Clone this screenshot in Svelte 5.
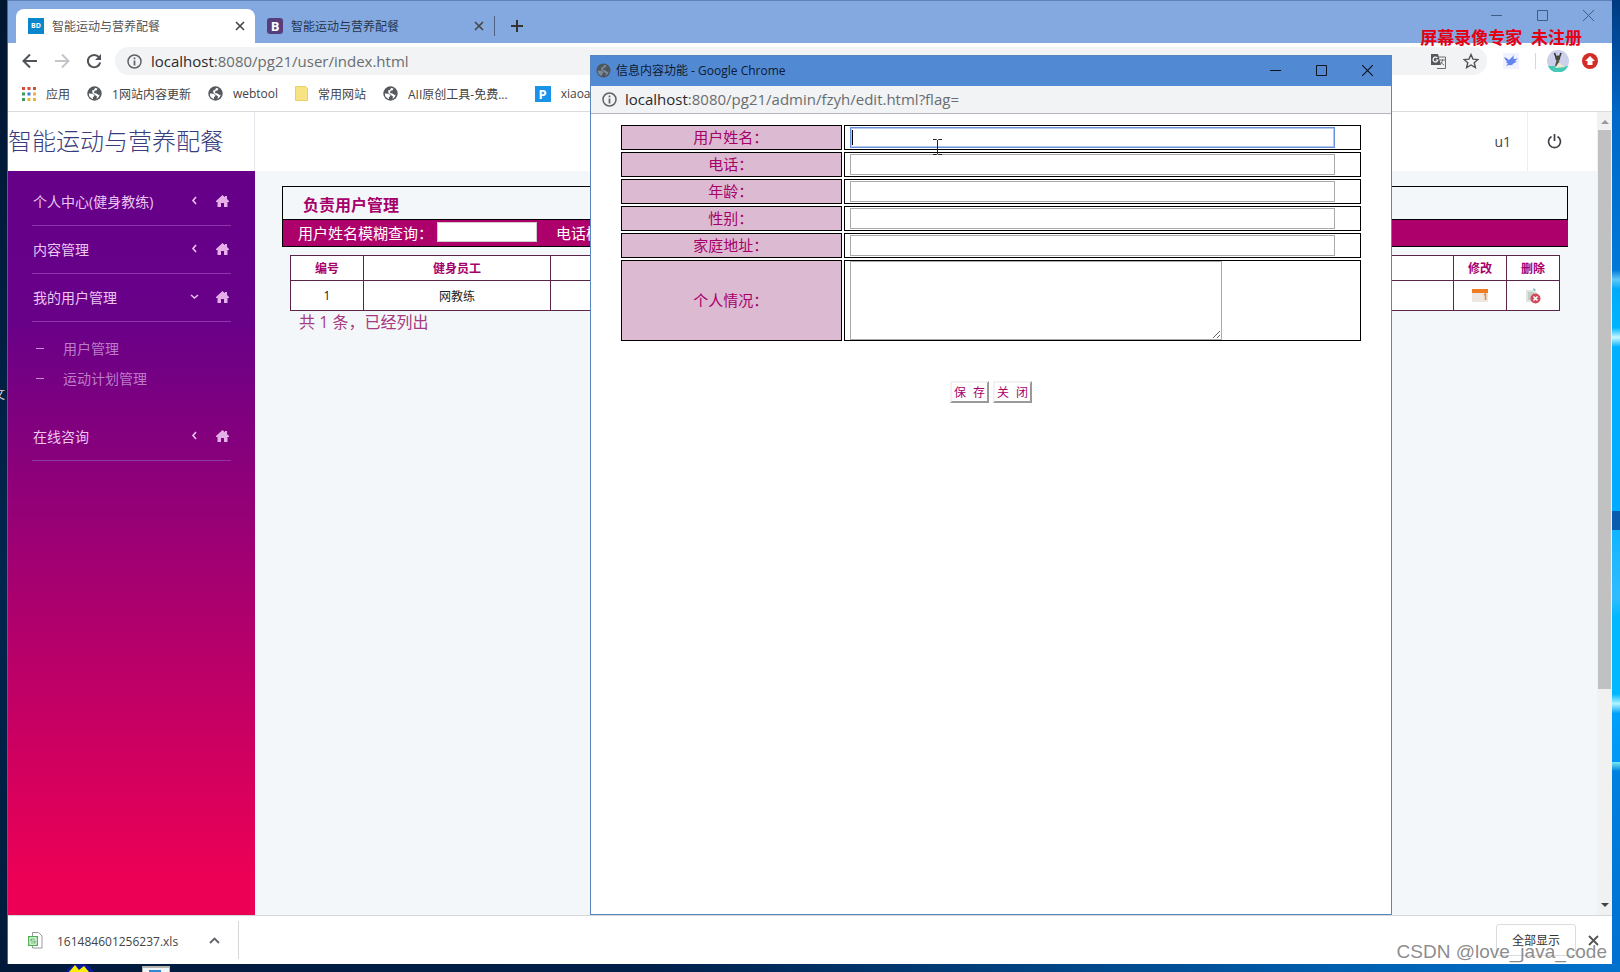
<script>
  let tabs = [
    { title: '智能运动与营养配餐', icon: 'bd', active: true },
    { title: '智能运动与营养配餐', icon: 'b', active: false }
  ];

  let bookmarks = [
    { name: '应用', icon: 'apps' },
    { name: '1网站内容更新', icon: 'globe' },
    { name: 'webtool', icon: 'globe' },
    { name: '常用网站', icon: 'folder' },
    { name: 'AII原创工具-免费...', icon: 'globe' },
    { name: 'xiaoa', icon: 'p' }
  ];

  let menu = [
    { name: '个人中心(健身教练)', open: false, children: [] },
    { name: '内容管理', open: false, children: [] },
    { name: '我的用户管理', open: true, children: ['用户管理', '运动计划管理'] },
    { name: '在线咨询', open: false, children: [] }
  ];

  let fields = [
    { id: 'yhxm', label: '用户姓名：' },
    { id: 'dh', label: '电话：' },
    { id: 'nl', label: '年龄：' },
    { id: 'xb', label: '性别：' },
    { id: 'jtdz', label: '家庭地址：' }
  ];
  let form = {};
</script>

<div class="desktop">
  <div class="wall-left"><span>文</span></div>
  <div class="browser">
    <div class="tabs">
      {#each tabs as tab}
        <div class="tab" class:active={tab.active}>
          {#if tab.icon === 'bd'}
            <span class="fav bd">BD</span>
          {:else}
            <span class="fav boot">B</span>
          {/if}
          <span class="tab-title">{tab.title}</span>
          <button class="plain" aria-label="关闭标签页">
            <svg width="10" height="10" viewBox="0 0 10 10"><path d="M1 1l8 8M9 1l-8 8" stroke="#444" stroke-width="1.6" /></svg>
          </button>
        </div>
      {/each}
      <button class="plain new-tab" aria-label="新标签页">
        <svg width="12" height="12" viewBox="0 0 12 12"><path d="M6 0v12M0 6h12" stroke="#333" stroke-width="2" /></svg>
      </button>
      <div class="win-btns faded">
        <button class="plain" aria-label="最小化"><svg width="11" height="11" viewBox="0 0 11 11"><path d="M0 5.5h11" stroke="#3f5b86" /></svg></button>
        <button class="plain" aria-label="最大化"><svg width="11" height="11" viewBox="0 0 11 11"><path d="M.5.5h10v10h-10z" fill="none" stroke="#3f5b86" /></svg></button>
        <button class="plain" aria-label="关闭"><svg width="11" height="11" viewBox="0 0 11 11"><path d="M0 0l11 11M11 0L0 11" stroke="#3f5b86" /></svg></button>
      </div>
    </div>

    <div class="toolbar">
      <button class="plain" aria-label="后退"><svg width="16" height="16" viewBox="0 0 16 16"><path d="M15 8H2M8 1.500L1.500 8 8 14.500" fill="none" stroke="#505357" stroke-width="2" /></svg></button>
      <button class="plain" aria-label="前进"><svg width="16" height="16" viewBox="0 0 16 16"><path d="M1 8h13M8 1.500L14.500 8 8 14.500" fill="none" stroke="#c3c5c8" stroke-width="2" /></svg></button>
      <button class="plain" aria-label="刷新"><svg width="16" height="16" viewBox="0 0 16 16"><path d="M13 4.200A6.200 6.200 0 1 0 14.200 9.500" fill="none" stroke="#505357" stroke-width="2" /><path d="M15 1v6H9z" fill="#505357" /></svg></button>
      <div class="omnibox">
        <svg width="15" height="15" viewBox="0 0 15 15"><circle cx="7.500" cy="7.500" r="6.500" fill="none" stroke="#5f6368" stroke-width="1.500" /><path d="M7.500 6.500v5M7.500 3.500v1.800" stroke="#5f6368" stroke-width="1.700" /></svg>
        <span class="url"><b>localhost</b>:8080/pg21/user/index.html</span>
        <svg class="push" width="15" height="15" viewBox="0 0 15 15"><path d="M0 0h7l3 11H0z" fill="#55585c" /><path d="M8 3h6.500v11.500H6M9 6h5M11.500 5v1.500q-.5 3-3 4M10 8q1 2 3 3" fill="none" stroke="#6a6d70" /><path d="M6.300 4A2.400 2.400 0 1 0 6.800 6H4.800" fill="none" stroke="#fff" stroke-width="1.200" /></svg>
        <svg width="16" height="16" viewBox="0 0 16 16"><path d="M8 1.500l2 4.600 5 .4-3.800 3.200 1.200 4.900L8 12l-4.400 2.600 1.200-4.900L1 6.500l5-.4z" fill="none" stroke="#505357" stroke-width="1.400" /></svg>
      </div>
      <svg class="bird" width="16" height="16" viewBox="0 0 16 16"><rect width="16" height="16" fill="#f0f2ff" /><path d="M1 4q3 1 5 3l5-5q-1 3 0 4l4-.5-3 2.500 2 1-3 1q-2 3-5 2l-3 1 2-2.500L3 9.500l1-1.200Q2 7 1 4z" fill="#6585ef" /></svg>
      <span class="bar-sep"></span>
      <svg class="avatar" width="22" height="22" viewBox="0 0 22 22"><circle cx="11" cy="11" r="11" fill="#cdd0ea" /><path d="M1 16h20a11 11 0 0 1-20 0z" fill="#43c9b5" /><path d="M7.500 3l1.500 4M14 3l-1.500 4" stroke="#333" stroke-width="1.600" /><circle cx="10.700" cy="8" r="2.500" fill="#46463f" /><path d="M9.500 10h2.500l1 6H8z" fill="#555448" /><path d="M12 12l3 3 4 2-11 1z" fill="#eee6d0" /></svg>
      <svg width="16" height="16" viewBox="0 0 16 16"><circle cx="8" cy="8" r="8" fill="#d32d27" /><path d="M8 3l5 5h-2.500v4h-5V8H3z" fill="#fff" /></svg>
    </div>

    <div class="bookmarks">
      {#each bookmarks as item}
        <a href="#top" class={item.icon}>
          {#if item.icon === 'apps'}
            <svg width="14" height="14" viewBox="0 0 14 14"><path d="M0 0h3v3H0zM5.500 0h3v3h-3zM11 0h3v3h-3z" fill="#d94b3f" /><path d="M0 5.500h3v3H0z" fill="#3c9a5c" /><path d="M5.500 5.500h3v3h-3z" fill="#3c78d8" /><path d="M11 5.500h3v3h-3zM5.500 11h3v3h-3zM11 11h3v3h-3z" fill="#e9b43a" /><path d="M0 11h3v3H0z" fill="#3c9a5c" /></svg>
          {:else if item.icon === 'globe'}
            <svg width="15" height="15" viewBox="0 0 15 15"><circle cx="7.500" cy="7.500" r="7.200" fill="#55595e" /><path d="M1.800 7.500l3.700.3 2 1.500-.5 1.200-1 .5v2Q2 12 1.800 7.500zM8 2l2.500.5-1 2-2 .3L7 7l2.500.5 2 1.500 1.300-.5Q12 12 9.500 13l.5-2.500-2-1.500-2.500-2L5 4.500 7 4z" fill="#fff" /></svg>
          {:else if item.icon === 'folder'}
            <svg width="13" height="15" viewBox="0 0 13 15"><path d="M.5.5h10l2 2v12H.5z" fill="#f8e384" stroke="#e8cf66" /></svg>
          {:else}
            <span class="fav p-icon">P</span>
          {/if}
          <span>{item.name}</span>
        </a>
      {/each}
    </div>

    <div class="page">
      <div class="side">
        <h1>智能运动与营养配餐</h1>
        <nav>
          {#each menu as item}
            <a href="#top" class="item">
              <span>{item.name}</span>
              {#if item.open}
                <svg class="chev" width="9" height="9" viewBox="0 0 9 9"><path d="M1 3l3.500 3L8 3" fill="none" stroke="#ecc0f0" stroke-width="1.600" /></svg>
              {:else}
                <svg class="chev" width="9" height="9" viewBox="0 0 9 9"><path d="M6 1L3 4.500 6 8" fill="none" stroke="#ecc0f0" stroke-width="1.600" /></svg>
              {/if}
              <svg width="13" height="12" viewBox="0 0 13 12"><path d="M6.500 0L9 2.300V1h2v3.100L13 6v1h-1.500v5H8V8H5v4H1.500V7H0V6z" fill="#e5b0ea" /></svg>
            </a>
            {#if item.open}
              <div class="sub">
                {#each item.children as child}
                  <a href="#top"><i></i>{child}</a>
                {/each}
              </div>
            {/if}
          {/each}
        </nav>
      </div>

      <div class="main">
        <header>
          <span class="user">u1</span>
          <button class="plain power" aria-label="退出">
            <svg width="15" height="15" viewBox="0 0 15 15"><path d="M4.500 2.500a6 6 0 1 0 6 0M7.500 0v7" fill="none" stroke="#3e4148" stroke-width="1.700" /></svg>
          </button>
        </header>
        <div class="content">
          <h2>负责用户管理</h2>
          <div class="search">
            <label for="q-name">用户姓名模糊查询：</label>
            <input id="q-name" type="text" />
            <label for="q-tel">电话模糊查询：</label>
            <input id="q-tel" type="text" />
          </div>
          <table class="list">
            <thead>
              <tr>
                <th class="c-no">编号</th>
                <th class="c-staff">健身员工</th>
                <th></th>
                <th class="c-op">修改</th>
                <th class="c-op">删除</th>
              </tr>
            </thead>
            <tbody>
              <tr>
                <td>1</td>
                <td>网教练</td>
                <td></td>
                <td>
                  <svg width="16" height="13" viewBox="0 0 16 13"><path d="M0 0h16v13H0z" fill="#eee7df" /><path d="M0 0h16v4H0z" fill="#ef7d20" /><path d="M12 6l1.500-1v6" fill="none" stroke="#e08a52" stroke-width="1.500" /></svg>
                </td>
                <td>
                  <svg width="16" height="16" viewBox="0 0 16 16"><path d="M1 2h8l3 2v10H1z" fill="#dfe5e0" /><path d="M3 5h6M3 7h6M3 9h4M3 11h3" stroke="#a9b8ac" /><path d="M8 0l3 2-2 1z" fill="#4fb3a0" /><circle cx="10.500" cy="10.500" r="5" fill="#d2495a" /><path d="M8.500 8.500l4 4M12.500 8.500l-4 4" stroke="#fff" stroke-width="1.600" /></svg>
                </td>
              </tr>
            </tbody>
          </table>
          <p>共 1 条，已经列出</p>
        </div>
      </div>
      <div class="scroll">
        <svg width="8" height="4" viewBox="0 0 8 4"><path d="M0 4l4-4 4 4z" fill="#9a9a9a" /></svg>
        <div class="thumb"></div>
        <svg width="8" height="4" viewBox="0 0 8 4"><path d="M0 0l4 4 4-4z" fill="#444" /></svg>
      </div>
    </div>

    <div class="downloads">
      <svg width="15" height="17" viewBox="0 0 15 17"><path d="M4.500.5h6l3.500 3.500v12H4.500z" fill="#fff" stroke="#9a9a9a" /><path d="M.7 4.700h8.600v8.600H.7z" fill="#fff" stroke="#4caf50" stroke-width="1.300" /><path d="M7.500 7H3v2h4v2H2.500" fill="none" stroke="#4caf50" stroke-width="1.200" /></svg>
      <span class="file">161484601256237.xls</span>
      <button class="plain more" aria-label="更多"><svg width="11" height="7" viewBox="0 0 11 7"><path d="M1 6l4.500-4.500L10 6" fill="none" stroke="#5f6368" stroke-width="1.800" /></svg></button>
      <button class="show-all">全部显示</button>
      <button class="plain" aria-label="关闭下载栏"><svg width="11" height="11" viewBox="0 0 11 11"><path d="M1 1l9 9M10 1l-9 9" stroke="#555" stroke-width="1.800" /></svg></button>
    </div>
  </div>
  <div class="wall-right"></div>
  <div class="wall-bottom">
    <svg class="thunder" width="28" height="8" viewBox="0 0 28 8"><path d="M0 8Q4 0 14 0q10 0 14 8z" fill="#0a1a9c" /><path d="M3 8l6-7 4 5 5-4 5 6z" fill="#ffee00" /></svg>
    <svg width="28" height="6" viewBox="0 0 28 6"><path d="M0 0h28v6H0z" fill="#b5b5b0" /><path d="M1 2h26v4H1z" fill="#f2f6fa" /><path d="M7 4h12v2H7z" fill="#2a8ad8" /></svg>
  </div>

  <div class="popup">
    <div class="popup-title">
      <svg width="15" height="15" viewBox="0 0 15 15"><circle cx="7.500" cy="7.500" r="7" fill="#4e565f" /><path d="M1.800 7.500l3.700.3 2 1.500-.5 1.200-1 .5v2Q2 12 1.800 7.500zM8 2l2.500.5-1 2-2 .3L7 7l2.500.5 2 1.500 1.300-.5Q12 12 9.500 13l.5-2.500-2-1.500-2.500-2L5 4.500 7 4z" fill="#7d8b99" /></svg>
      <span>信息内容功能 - Google Chrome</span>
      <div class="win-btns">
        <button class="plain" aria-label="最小化"><svg width="11" height="11" viewBox="0 0 11 11"><path d="M0 5.500h11" stroke="#0a1424" /></svg></button>
        <button class="plain" aria-label="最大化"><svg width="11" height="11" viewBox="0 0 11 11"><path d="M.5.5h10v10h-10z" fill="none" stroke="#0a1424" /></svg></button>
        <button class="plain" aria-label="关闭"><svg width="11" height="11" viewBox="0 0 11 11"><path d="M0 0l11 11M11 0L0 11" stroke="#0a1424" stroke-width="1.200" /></svg></button>
      </div>
    </div>
    <div class="popup-url">
      <svg width="15" height="15" viewBox="0 0 15 15"><circle cx="7.500" cy="7.500" r="6.500" fill="none" stroke="#5f6368" stroke-width="1.500" /><path d="M7.500 6.500v5M7.500 3.500v1.800" stroke="#5f6368" stroke-width="1.700" /></svg>
      <span class="url"><b>localhost</b>:8080/pg21/admin/fzyh/edit.html?flag=</span>
    </div>
    <form on:submit|preventDefault>
      <table class="edit">
        <tbody>
          {#each fields as field, i}
            <tr>
              <td class="name"><label for={field.id}>{field.label}</label></td>
              <td>
                <div class="field" class:focused={i === 0}>
                  {#if i === 0}<span class="caret"></span>{/if}
                  <input id={field.id} type="text" bind:value={form[field.id]} />
                </div>
              </td>
            </tr>
          {/each}
          <tr>
            <td class="name"><label for="grqk">个人情况：</label></td>
            <td><textarea id="grqk" bind:value={form.grqk}></textarea></td>
          </tr>
        </tbody>
      </table>
      <div class="actions">
        <button type="submit">保 存</button>
        <button type="button">关 闭</button>
      </div>
    </form>
    <svg class="cursor" width="9" height="16" viewBox="0 0 9 16"><path d="M0 .5h3.500l1 1 1-1H9M4.500 1v14M0 15.500h3.500l1-1 1 1H9" fill="none" stroke="#222" /></svg>
  </div>

  <div class="rec-mark">屏幕录像专家&nbsp; 未注册</div>
  <div class="csdn">CSDN @love_java_code</div>
</div>

<style>
  :global(body) {
    margin: 0;
    font-family: "Open Sans", "Noto Sans CJK SC", sans-serif;
    font-size: 12px;
    color: #444;
  }

  .desktop {
    position: relative;
    display: grid;
    grid-template-columns: 8px 1fr 8px;
    grid-template-rows: 1fr 8px;
    height: 100vh;
    overflow: hidden;
    background: #02204a;
  }

  .desktop * {
    box-sizing: border-box;
  }

  svg {
    display: block;
    flex: none;
  }

  a {
    color: inherit;
    text-decoration: none;
  }

  .plain {
    border: 0;
    padding: 0;
    background: none;
    flex: none;
  }

  .wall-left {
    display: flex;
    align-items: center;
    justify-content: flex-end;
    padding: 0 2px 176px 0;
    overflow: hidden;
    color: #ddd;
    background: linear-gradient(#011630, #02254e 60%, #011a3a);
    border-right: 1px solid #3d6a9c;
  }

  .wall-right {
    background: linear-gradient(#003a80, #0068c8 12%, #0078d8 28%, #60c8f8 29%, #00aaf8 30%, #00b4ff 34%, #c8f8ff 35%, #00b0ff 36%, #00aaff 53%, #80d8ff 53%, #0a5cae 53%, #0a5cae 55%, #80d8ff 55%, #10b4ff 55%, #30bcff 62%, #00b8ff 64%, #00b8ff 72%, #b0f4ff 73%, #00a0fa 74%, #0098f4 79%, #80f0f0 79%, #0080e0 80%, #0070d0);
  }

  .wall-bottom {
    grid-column: 1 / -1;
    display: flex;
    align-items: flex-end;
    gap: 48px;
    padding-left: 66px;
    background: linear-gradient(90deg, #011a3a, #01204a 40%, #0262b4 85%, #0272cc);
  }

  .browser {
    display: flex;
    flex-direction: column;
    min-width: 0;
    background: #fff;
    border-top: 1px solid #5f82b8;
  }

  .tabs {
    display: flex;
    align-items: flex-end;
    height: 42px;
    flex: none;
    padding-left: 8px;
    background: #83a9e0;
  }

  .tab {
    display: flex;
    align-items: center;
    gap: 8px;
    width: 239px;
    height: 34px;
    padding: 0 10px 0 12px;
    color: #26354d;
  }

  .tab.active {
    color: #555;
    background: #fff;
    border-radius: 8px 8px 0 0;
  }

  .tab-title {
    flex: 1;
  }

  .fav {
    display: block;
    width: 16px;
    height: 16px;
    flex: none;
    color: #fff;
    font-weight: 700;
    text-align: center;
    line-height: 16px;
  }

  .bd {
    font-size: 7px;
    background: #0a86cc;
  }

  .boot {
    font-size: 13px;
    border-radius: 3px;
    background: #563d7c;
  }

  .p-icon {
    font-size: 13px;
    background: #1893ea;
  }

  .new-tab {
    height: 20px;
    margin-bottom: 7px;
    padding: 0 16px;
    border-left: 1px solid #4d6285;
  }

  .win-btns {
    display: flex;
    align-items: center;
    gap: 35px;
    margin-left: auto;
  }

  .faded {
    align-self: flex-start;
    height: 28px;
    margin-right: 18px;
  }

  .toolbar {
    display: flex;
    align-items: center;
    gap: 16px;
    height: 36px;
    flex: none;
    padding: 0 14px;
  }

  .omnibox {
    display: flex;
    align-items: center;
    flex: 1;
    gap: 9px;
    height: 28px;
    padding: 0 8px 0 12px;
    margin-left: -3px;
    border-radius: 14px;
    background: #f1f3f4;
  }

  .push {
    margin-left: auto;
    margin-right: 8px;
  }

  .url {
    padding-bottom: 1px;
    font-size: 15px;
    color: #6a6d70;
  }

  .url b {
    font-weight: 400;
    color: #2a2b2d;
  }

  .bar-sep {
    width: 1px;
    height: 16px;
    background: #d5d7da;
  }

  .avatar {
    margin: 0 -3px 0 -5px;
  }

  .bookmarks {
    display: flex;
    align-items: center;
    gap: 17px;
    height: 33px;
    flex: none;
    padding: 0 0 3px 14px;
    border-bottom: 1px solid #dadce0;
  }

  .bookmarks a {
    display: flex;
    align-items: center;
    gap: 10px;
  }

  .bookmarks .p {
    margin-left: 10px;
  }

  .page {
    display: flex;
    flex: 1;
    min-height: 0;
    background: #f4f7fa;
  }

  .side {
    display: flex;
    flex-direction: column;
    width: 247px;
    flex: none;
  }

  h1 {
    height: 59px;
    margin: 0;
    font-size: 24px;
    font-weight: 300;
    line-height: 57px;
    color: #3a3d7c;
    background: #fff;
    border-right: 1px solid #e4e6ec;
  }

  nav {
    flex: 1;
    padding: 7px 24px;
    font-size: 14px;
    color: #ecc6f0;
    background: linear-gradient(#660089, #680088 20%, #ec0055 95%);
  }

  .item {
    display: flex;
    align-items: center;
    height: 48px;
    padding: 0 2px 2px 1px;
    border-bottom: 1px solid #8f36a8;
  }

  .chev {
    margin-left: auto;
    margin-right: 17px;
  }

  .sub {
    padding: 11px 0 20px 4px;
    color: #bd7cc8;
  }

  .sub a {
    display: flex;
    align-items: center;
    gap: 19px;
    height: 30px;
  }

  .sub i {
    width: 8px;
    height: 1px;
    background: #cf8ad8;
  }

  .main {
    flex: 1;
    min-width: 0;
  }

  header {
    display: flex;
    justify-content: flex-end;
    height: 59px;
    background: #fff;
  }

  .user {
    padding: 0 16px;
    font-size: 14px;
    line-height: 59px;
    border-right: 1px solid #eceef2;
  }

  .power {
    width: 69px;
    padding: 0 19px;
  }

  .content {
    padding: 15px 29px 0 27px;
  }

  h2 {
    height: 34px;
    margin: 0;
    padding-left: 20px;
    font-size: 16px;
    line-height: 36px;
    color: #a6006a;
    border: 1px solid #000;
  }

  .search {
    display: flex;
    align-items: center;
    height: 27px;
    padding: 0 0 2px 15px;
    overflow: hidden;
    white-space: nowrap;
    font-size: 15px;
    color: #fff;
    background: #ae006b;
    border: 1px solid #000;
    border-width: 0 0 1px 1px;
  }

  .search input {
    width: 100px;
    height: 20px;
    flex: none;
    margin: 0 19px 0 4px;
    border: 1px solid #ccc;
  }

  .list {
    width: calc(100% - 16px);
    margin: 8px 8px 0;
    table-layout: fixed;
    border-collapse: collapse;
    text-align: center;
    color: #222;
    background: #fff;
  }

  .list th,
  .list td {
    height: 30px;
    padding: 0;
    border: 1px solid #5a2348;
  }

  .list th {
    height: 25px;
    color: #a6006a;
  }

  .list td svg {
    margin: 0 auto;
  }

  .c-no {
    width: 73px;
  }

  .c-staff {
    width: 187px;
  }

  .c-op {
    width: 53px;
  }

  .content p {
    margin: 0 0 0 17px;
    font-size: 16px;
    line-height: 22px;
    color: #a63a80;
  }

  .scroll {
    display: flex;
    flex-direction: column;
    align-items: center;
    gap: 6px;
    width: 15px;
    flex: none;
    padding: 8px 0;
    background: #f1f1f1;
  }

  .thumb {
    width: 13px;
    height: 71%;
    margin-bottom: auto;
    background: #c1c1c1;
  }

  .downloads {
    display: flex;
    align-items: center;
    height: 49px;
    flex: none;
    padding: 0 13px 0 20px;
    background: #fff;
    border-top: 1px solid #d5d7da;
  }

  .file {
    margin: 0 13px 0 14px;
    padding-top: 3px;
  }

  .more {
    height: 38px;
    padding: 0 18px;
    border-right: 1px solid #d5d7da;
  }

  .show-all {
    width: 80px;
    height: 32px;
    margin: 0 12px 0 auto;
    padding: 0;
    font: inherit;
    color: #333;
    background: #fff;
    border: 1px solid #dadce0;
    border-radius: 3px;
  }

  .popup {
    position: absolute;
    left: 590px;
    right: 228px;
    top: 55px;
    bottom: 57px;
    background: #fff;
    border: 1px solid #5a86c0;
  }

  .popup-title {
    display: flex;
    align-items: center;
    gap: 5px;
    height: 30px;
    padding: 0 18px 2px 5px;
    color: #0c1a33;
    background: #5289d3;
  }

  .popup-url {
    display: flex;
    align-items: center;
    gap: 8px;
    height: 28px;
    padding-left: 11px;
    background: #f1f3f4;
    border-bottom: 1px solid #b4b8bc;
  }

  .edit {
    width: 93%;
    margin: 9px auto 0;
    border-spacing: 2px;
    font-size: 15px;
  }

  .edit td {
    height: 25px;
    padding: 0 0 0 5px;
    border: 1px solid #000;
  }

  .edit .name {
    width: 30%;
    padding: 0 2px 2px 0;
    text-align: center;
    line-height: 20px;
    color: #a6006a;
    background: #dcbbd2;
  }

  .field {
    display: flex;
    align-items: center;
    width: 95%;
    height: 21px;
    border: 1px solid #aaa;
  }

  .focused {
    border-color: #6a90dc;
    box-shadow: inset 0 0 0 1px #b5c8ee;
  }

  .caret {
    width: 1px;
    height: 15px;
    margin-left: 1px;
    background: #000;
  }

  .field input {
    flex: 1;
    min-width: 0;
    height: 17px;
    padding: 0 2px;
    border: 0;
    outline: 0;
    background: none;
  }

  textarea {
    display: block;
    width: 73%;
    height: 79px;
    border: 1px solid #aaa;
  }

  .actions {
    display: flex;
    justify-content: center;
    gap: 4px;
    margin-top: 38px;
  }

  .actions button {
    width: 39px;
    height: 22px;
    padding: 0;
    font-family: "Liberation Mono", "Noto Sans CJK SC", monospace;
    font-size: 12px;
    white-space: nowrap;
    color: #a6006a;
    background: #fff;
    border: 2px solid #f2f2f2;
    border-right-color: #999;
    border-bottom-color: #999;
  }

  .cursor {
    position: absolute;
    left: 342px;
    top: 83px;
  }

  .rec-mark {
    position: absolute;
    top: 26px;
    right: 38px;
    font-size: 17px;
    font-weight: 700;
    line-height: 24px;
    color: #e60012;
  }

  .csdn {
    position: absolute;
    right: 13px;
    bottom: 8px;
    font-family: "Liberation Sans", sans-serif;
    font-size: 19px;
    line-height: 24px;
    color: rgba(110, 110, 110, 0.8);
  }
</style>
